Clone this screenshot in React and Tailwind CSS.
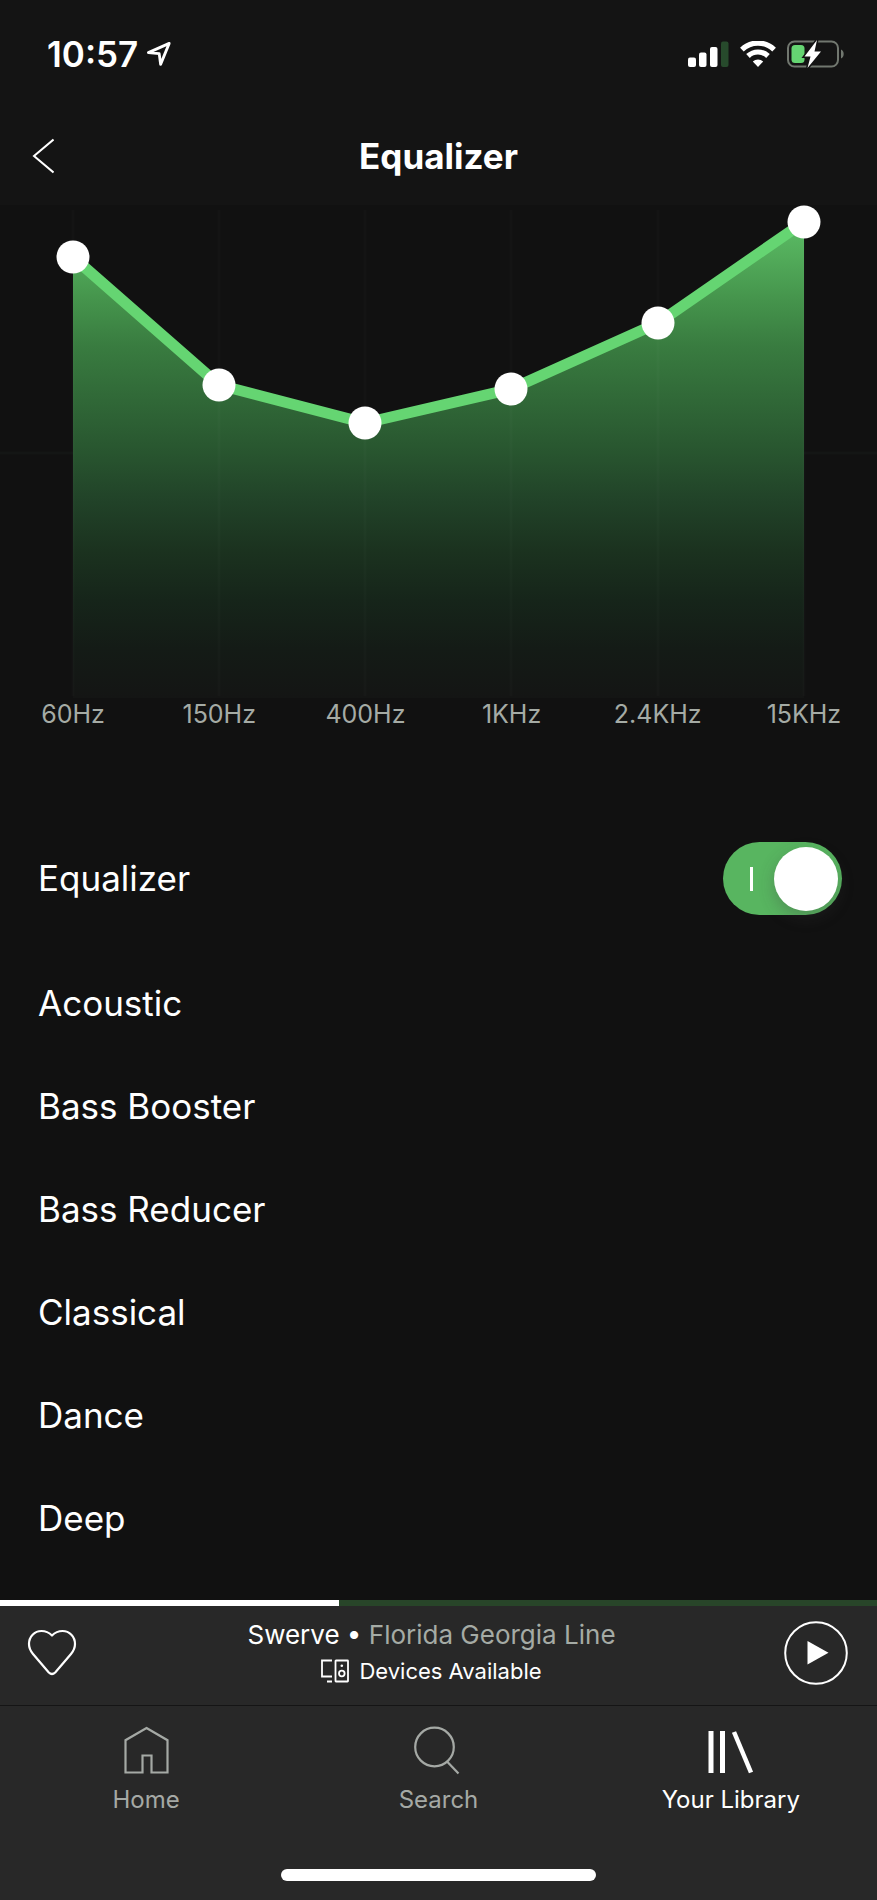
import { useState } from "react";

const CHART_HEIGHT = 490;
const COLUMN_CENTERS = [73, 219, 365, 511, 658, 804];

const BANDS = [
  { label: "60Hz", gain: 441 },
  { label: "150Hz", gain: 313 },
  { label: "400Hz", gain: 275 },
  { label: "1KHz", gain: 309 },
  { label: "2.4KHz", gain: 375 },
  { label: "15KHz", gain: 476 },
];

const PRESETS = ["Acoustic", "Bass Booster", "Bass Reducer", "Classical", "Dance", "Deep"];

function StatusBar() {
  return (
    <div className="flex h-[108px] items-center justify-between pr-8 pl-[47px]">
      <div className="flex items-center gap-2 text-[35px] leading-10 font-semibold">
        <span>10:57</span>
        <svg width="26" height="26" viewBox="0 0 26 26" fill="none" stroke="currentColor" strokeWidth="2.8" strokeLinejoin="round" aria-hidden="true">
          <path d="M23.2 2.4 2.4 11.6 13.2 12.6 14.6 23.4Z" />
        </svg>
      </div>
      <div className="flex items-center gap-[11px]">
        <svg width="41" height="26" viewBox="0 0 41 26" fill="currentColor" aria-hidden="true">
          <rect x="0" y="16.5" width="8" height="9.5" rx="2" />
          <rect x="11" y="11.5" width="7.5" height="14.5" rx="2" />
          <rect x="22" y="6" width="7.5" height="20" rx="2" />
          <rect x="33" y="0.5" width="7.5" height="25.5" rx="2" fill="#274a2c" />
        </svg>
        <svg width="36" height="26" viewBox="0 0 36 26" aria-hidden="true">
          <g fill="none" stroke="currentColor" strokeWidth="5.2">
            <path d="M1.9 8.6A23 23 0 0 1 34.1 8.6" />
            <path d="M8 15A14.5 14.5 0 0 1 28 15" />
          </g>
          <path d="M18 26 12.8 20.6A7.6 7.6 0 0 1 23.2 20.6Z" fill="currentColor" />
        </svg>
        <svg width="58" height="28" viewBox="0 0 58 28" aria-hidden="true">
          <rect x="1" y="1.5" width="50" height="25" rx="6.5" fill="none" stroke="#71776f" strokeWidth="2" />
          <path d="M54 9.5C57.6 11 57.6 17 54 18.5Z" fill="#71776f" />
          <rect x="4.5" y="5" width="13" height="18" rx="3.5" fill="#65d572" />
          <path d="M30 0 17.5 16.4H23.5L20.5 28 34 11.5H27.5Z" fill="#fff" stroke="#141414" strokeWidth="3" paintOrder="stroke" />
        </svg>
      </div>
    </div>
  );
}

function Header() {
  return (
    <header className="grid h-[97px] grid-cols-[80px_1fr_80px] items-center pb-0.5">
      <button type="button" aria-label="Back" className="flex h-full items-center pl-8">
        <svg width="22" height="36" viewBox="0 0 22 36" fill="none" stroke="currentColor" strokeWidth="2" aria-hidden="true">
          <path d="M21.5 1.5 2 18 21.5 34.5" />
        </svg>
      </button>
      <h1 className="text-center text-[35px] leading-10 font-bold">Equalizer</h1>
    </header>
  );
}

function Chart() {
  const [gains, setGains] = useState(BANDS.map((band) => band.gain));
  const points = gains.map((gain, i) => [COLUMN_CENTERS[i], CHART_HEIGHT - gain]);
  const line = points.map((p) => p.join(",")).join(" ");

  return (
    <section aria-label="Frequency bands">
      <div className="relative">
        <svg viewBox="0 0 877 490" className="block w-full overflow-visible" aria-hidden="true">
          <defs>
            <linearGradient id="fill" gradientUnits="userSpaceOnUse" x1="0" y1="0" x2="0" y2="490">
              <stop offset="0.03" stopColor="#5bbd65" />
              <stop offset="0.1" stopColor="#52ab5a" />
              <stop offset="0.18" stopColor="#46964d" />
              <stop offset="0.28" stopColor="#397c40" />
              <stop offset="0.38" stopColor="#316a38" />
              <stop offset="0.5" stopColor="#28552f" />
              <stop offset="0.6" stopColor="#214228" />
              <stop offset="0.7" stopColor="#1b321f" />
              <stop offset="0.8" stopColor="#16251a" />
              <stop offset="0.9" stopColor="#141b16" />
              <stop offset="1" stopColor="#141514" />
            </linearGradient>
          </defs>
          <path d="M0 245H877" stroke="#141615" strokeWidth="3" />
          <polygon points={`73,490 ${line} 804,490`} fill="url(#fill)" />
          {COLUMN_CENTERS.map((x) => (
            <path key={x} d={`M${x} 2V488`} stroke="#ffffff" strokeOpacity="0.014" strokeWidth="3" />
          ))}
          <polyline points={line} fill="none" stroke="#65d572" strokeWidth="11" strokeLinejoin="round" />
          {points.map(([x, y]) => (
            <circle key={x} cx={x} cy={y} r="16.5" fill="#fff" />
          ))}
        </svg>
        <div className="absolute inset-0 grid grid-cols-6">
          {BANDS.map((band, i) => (
            <input
              key={band.label}
              id={`band-${i}`}
              type="range"
              min="0"
              max="490"
              value={gains[i]}
              onChange={(e) => setGains(gains.map((g, j) => (j === i ? Number(e.target.value) : g)))}
              className="h-full w-8 cursor-pointer justify-self-center opacity-0 [direction:rtl] [writing-mode:vertical-lr]"
            />
          ))}
        </div>
      </div>
      <div className="grid grid-cols-6 text-center text-[25px] leading-8 text-[#a5aba5]">
        {BANDS.map((band, i) => (
          <label key={band.label} htmlFor={`band-${i}`}>
            {band.label}
          </label>
        ))}
      </div>
    </section>
  );
}

function EqualizerSwitch() {
  const [on, setOn] = useState(true);
  return (
    <label className="flex h-[147px] cursor-pointer items-center justify-between pr-[35px] pl-[38px]">
      <span>Equalizer</span>
      <input
        type="checkbox"
        role="switch"
        checked={on}
        onChange={() => setOn(!on)}
        className="peer sr-only"
      />
      <span className="flex h-[73px] w-[119px] items-center justify-between rounded-full bg-[#535353] pr-1 pl-[27px] peer-checked:bg-[#58b560]">
        <span className="h-6 w-[3px] bg-white" />
        <span className="size-16 rounded-full bg-white shadow-[0_6px_16px_rgba(60,60,60,0.3)]" />
      </span>
    </label>
  );
}

function Player() {
  return (
    <section aria-label="Now playing" className="bg-[#282828]">
      <div className="h-1.5 bg-[#284529]">
        <div className="h-full w-[38.6%] bg-white" />
      </div>
      <div className="grid h-[99px] grid-cols-[70px_1fr_80px] items-center pr-[29px] pb-1.5 pl-[25px]">
        <button type="button" aria-label="Like">
          <svg width="54" height="50" viewBox="0 0 54 50" fill="none" stroke="currentColor" strokeWidth="2.2" strokeLinejoin="round" aria-hidden="true">
            <path d="M27 7.500C24 4.500 20.500 3 16.500 3 9.500 3 4 8.500 4 16C4 20 5.500 23 8 26L23.800 44.500Q27 47.500 30.200 44.500L46 26C48.500 23 50 20 50 16 50 8.500 44.500 3 37.500 3 33.500 3 30 4.500 27 7.500Z" />
          </svg>
        </button>
        <div className="flex flex-col items-center">
          <p className="text-[26px] leading-9">
            Swerve • <span className="text-[#a5aba5]">Florida Georgia Line</span>
          </p>
          <button type="button" className="flex items-center gap-2.5 text-[22px] leading-9">
            <svg width="28" height="24" viewBox="0 0 28 24" fill="none" stroke="currentColor" strokeWidth="1.8" aria-hidden="true">
              <path d="M11 1.5H1V17.5H11M6 22.5H11" />
              <rect x="14.5" y="1.5" width="12.5" height="21" rx="0.5" />
              <circle cx="20.8" cy="14.5" r="2.8" />
              <circle cx="20.8" cy="6.8" r="1.3" fill="currentColor" stroke="none" />
            </svg>
            Devices Available
          </button>
        </div>
        <button type="button" aria-label="Play" className="justify-self-end">
          <svg width="64" height="64" viewBox="0 0 64 64" aria-hidden="true">
            <circle cx="32" cy="32" r="30.8" fill="none" stroke="currentColor" strokeWidth="2" />
            <path d="M23.500 20V43.500L44.500 31.700Z" fill="currentColor" />
          </svg>
        </button>
      </div>
    </section>
  );
}

function NavItem({ label, active, children }) {
  return (
    <a
      href={`#${label}`}
      aria-current={active ? "page" : undefined}
      className={`flex flex-col items-center gap-[7px] ${active ? "text-white" : "text-[#a5a9a5]"}`}
    >
      <svg width="50" height="50" viewBox="0 0 50 50" fill="none" stroke="currentColor" strokeWidth="2.2" aria-hidden="true">
        {children}
      </svg>
      <span>{label}</span>
    </a>
  );
}

function BottomNav() {
  return (
    <footer className="flex h-[195px] flex-col justify-between border-t border-[#151515] bg-[#282828] pt-[19px] pb-[19px]">
      <nav className="grid grid-cols-3 text-2xl leading-9">
        <NavItem label="Home">
          <path d="M25.500 3 46.500 15.200V47.500H30.500V30.500H21.500V47.500H4.500V15.200Z" />
        </NavItem>
        <NavItem label="Search">
          <circle cx="21.500" cy="22" r="19.300" />
          <path d="M34 36.500 45.500 48.500" />
        </NavItem>
        <NavItem label="Your Library" active>
          <g strokeWidth="5">
            <path d="M5 6V48M16.500 6V48" />
            <path d="M28 7 45 47.500" strokeWidth="4.500" />
          </g>
        </NavItem>
      </nav>
      <div className="mx-auto h-3 w-[36%] rounded-full bg-white" />
    </footer>
  );
}

export default function App() {
  return (
    <div className="flex min-h-screen flex-col bg-[#111111] font-[Inter,sans-serif] text-white">
      <div className="bg-[#141414]">
        <StatusBar />
        <Header />
      </div>
      <main className="flex-1 pt-[3px] text-[35px] leading-[103px]">
        <Chart />
        <div className="pt-[75px]">
          <EqualizerSwitch />
        </div>
        <ul>
          {PRESETS.map((preset) => (
            <li key={preset}>
              <button type="button" className="block w-full pl-[38px] text-left">
                {preset}
              </button>
            </li>
          ))}
        </ul>
      </main>
      <Player />
      <BottomNav />
    </div>
  );
}
